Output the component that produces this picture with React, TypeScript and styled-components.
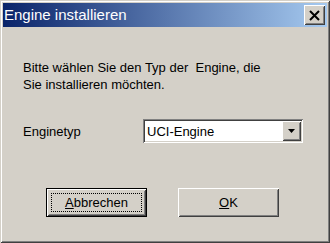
import { createGlobalStyle, styled } from 'styled-components';

const GlobalStyle = createGlobalStyle`
  html, body {
    margin: 0;
    padding: 0;
    background: #d4d0c8;
  }
  body {
    font-family: 'Liberation Sans', Arial, sans-serif;
  }
`;

const raised = `
  box-shadow:
    inset 1px 1px #ffffff,
    inset -1px -1px #404040,
    inset 2px 2px #d4d0c8,
    inset -2px -2px #808080;
`;

const App = () => {
  return (
    <>
      <GlobalStyle />
      <StWindow>
        <StTitleBar>
          <StTitle>Engine installieren</StTitle>
          <StCloseBtn type="button" aria-label="Schließen">
            <svg width="11" height="11" viewBox="0 0 11 11">
              <path d="M1 1 L10 10 M10 1 L1 10" stroke="#000" strokeWidth="2" />
            </svg>
          </StCloseBtn>
        </StTitleBar>
        <StBody>
          <StMessage>
            {'Bitte wählen Sie den Typ der  Engine, die\nSie installieren möchten.'}
          </StMessage>
          <StFieldRow>
            <StLabel>Enginetyp</StLabel>
            <StCombo>
              <StComboValue>UCI-Engine</StComboValue>
              <StArrowBtn>
                <svg width="7" height="4" viewBox="0 0 7 4">
                  <path d="M0 0 H7 L3.5 4 Z" fill="#000" />
                </svg>
              </StArrowBtn>
            </StCombo>
          </StFieldRow>
          <StBtnRow>
            <StButton type="button" $isDefault>
              <StFocus>
                <u>A</u>bbrechen
              </StFocus>
            </StButton>
            <StButton type="button">
              <span>
                <u>O</u>K
              </span>
            </StButton>
          </StBtnRow>
        </StBody>
      </StWindow>
    </>
  );
};

export default App;

const StWindow = styled.div`
  display: flex;
  flex-direction: column;

  width: 330px;
  height: 243px;
  padding: 3px;

  box-sizing: border-box;
  background-color: #d4d0c8;
  box-shadow:
    inset 1px 1px #d4d0c8,
    inset -1px -1px #404040,
    inset 2px 2px #ffffff,
    inset -2px -2px #808080;
`;

const StTitleBar = styled.div`
  display: flex;
  justify-content: space-between;
  align-items: center;

  height: 24px;
  padding: 0 2px 0 1px;

  box-sizing: border-box;
  background: linear-gradient(to right, #0a246a, #a6caf0);
`;

const StTitle = styled.span`
  color: #ffffff;
  font-size: 15px;
  line-height: 24px;
  white-space: nowrap;
`;

const StCloseBtn = styled.button`
  display: flex;
  justify-content: center;
  align-items: center;

  width: 21px;
  height: 20px;
  padding: 0;

  border: none;
  background-color: #d4d0c8;
  ${raised};
`;

const StBody = styled.div`
  display: flex;
  flex-direction: column;

  padding: 32px 0 0 20px;
`;

const StMessage = styled.div`
  font-size: 13px;
  line-height: 17px;
  color: #000000;
  white-space: pre;
`;

const StFieldRow = styled.div`
  display: flex;
  align-items: center;

  margin-top: 26px;
`;

const StLabel = styled.span`
  width: 120px;

  font-size: 13px;
  color: #000000;
`;

const StCombo = styled.div`
  display: flex;
  align-items: stretch;

  width: 160px;
  height: 24px;
  padding: 2px;

  box-sizing: border-box;
  background-color: #ffffff;
  box-shadow:
    inset 1px 1px #808080,
    inset -1px -1px #ffffff,
    inset 2px 2px #404040,
    inset -2px -2px #d4d0c8;
`;

const StComboValue = styled.span`
  flex: 1;
  display: flex;
  align-items: center;

  padding-left: 2px;

  font-size: 13px;
  color: #000000;
`;

const StArrowBtn = styled.div`
  display: flex;
  justify-content: center;
  align-items: center;

  width: 19px;

  background-color: #d4d0c8;
  ${raised};
`;

const StBtnRow = styled.div`
  display: flex;
  gap: 31px;

  margin-top: 45px;
  padding-left: 23px;
`;

const StButton = styled.button<{ $isDefault?: boolean }>`
  display: flex;
  justify-content: center;
  align-items: center;

  width: 101px;
  height: 29px;
  padding: 0;

  border: none;
  background-color: #d4d0c8;
  color: #000000;
  font-family: 'Liberation Sans', Arial, sans-serif;
  font-size: 13px;
  ${({ $isDefault }) =>
    $isDefault
      ? `box-shadow:
          inset 0 0 0 1px #000000,
          inset 2px 2px #ffffff,
          inset -2px -2px #404040,
          inset 3px 3px #d4d0c8,
          inset -3px -3px #808080;`
      : `box-shadow:
          inset 1px 1px #ffffff,
          inset -1px -1px #404040,
          inset 2px 2px #d4d0c8,
          inset -2px -2px #808080;`}
`;

const StFocus = styled.span`
  display: flex;
  justify-content: center;
  align-items: center;

  width: calc(100% - 10px);
  height: calc(100% - 10px);

  box-sizing: border-box;
  border: 1px dotted #000000;
`;
